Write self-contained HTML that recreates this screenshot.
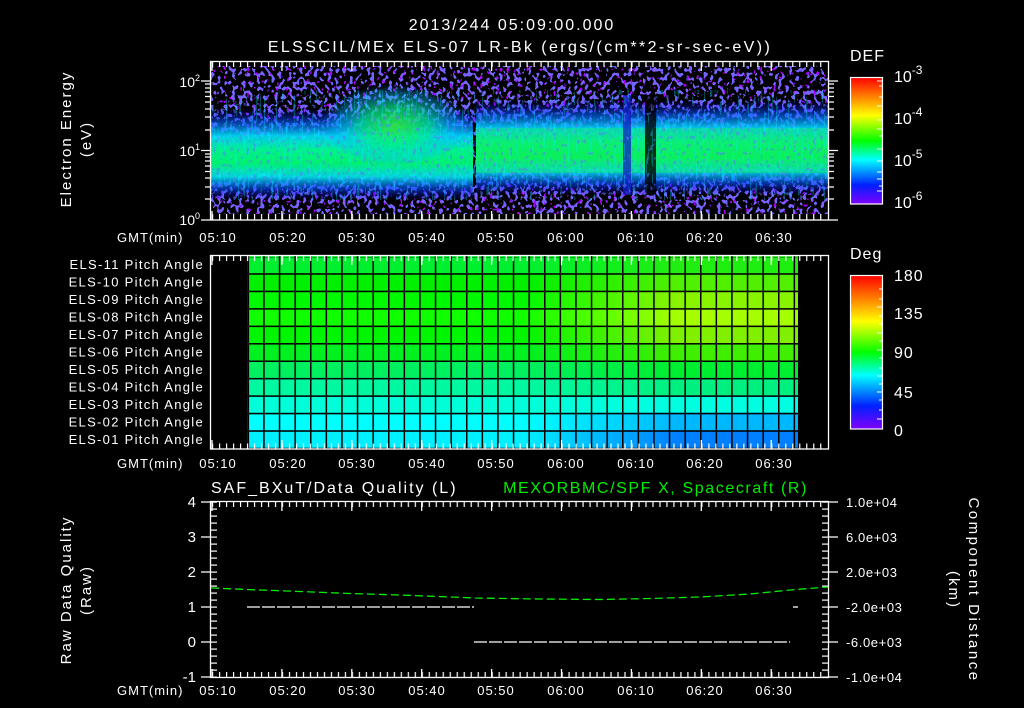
<!DOCTYPE html>
<html><head><meta charset="utf-8"><style>
html,body{margin:0;padding:0;background:#000;width:1024px;height:708px;overflow:hidden}
svg{display:block}
text{font-family:"Liberation Sans",sans-serif;fill:#fff}
.t{letter-spacing:1px}
</style></head><body>
<svg width="1024" height="708" viewBox="0 0 1024 708" xmlns="http://www.w3.org/2000/svg">
<defs>
<filter id="nz" x="0" y="0" width="1" height="1" filterUnits="objectBoundingBox">
 <feTurbulence type="fractalNoise" baseFrequency="0.28 0.22" numOctaves="1" seed="7"/>
 <feColorMatrix type="matrix" values="0 0 0 0 0.18  0 0 0 0 0.12  0 0 0 0 1  7 0 0 0 -3.5"/>
 <feComponentTransfer><feFuncA type="discrete" tableValues="0 1"/></feComponentTransfer>
</filter>
<filter id="nz2" x="0" y="0" width="1" height="1" filterUnits="objectBoundingBox">
 <feTurbulence type="fractalNoise" baseFrequency="0.3 0.25" numOctaves="1" seed="21"/>
 <feColorMatrix type="matrix" values="0 0 0 0 0.4  0 0 0 0 0  0 0 0 0 1  8 0 0 0 -4.9"/>
 <feComponentTransfer><feFuncA type="discrete" tableValues="0 1"/></feComponentTransfer>
</filter>
<filter id="nzb" x="0" y="0" width="1" height="1" filterUnits="objectBoundingBox">
 <feTurbulence type="fractalNoise" baseFrequency="0.3 0.25" numOctaves="1" seed="12"/>
 <feColorMatrix type="matrix" values="0 0 0 0 0.1  0 0 0 0 0.2  0 0 0 0 1  8 0 0 0 -4.7"/>
 <feComponentTransfer><feFuncA type="discrete" tableValues="0 1"/></feComponentTransfer>
</filter>
<filter id="nz3" x="0" y="0" width="1" height="1" filterUnits="objectBoundingBox">
 <feTurbulence type="fractalNoise" baseFrequency="0.5 0.06" numOctaves="1" seed="4"/>
 <feColorMatrix type="matrix" values="0 0 0 0 0  0 0 0 0 0.9  0 0 0 0 1  6 0 0 0 -3.4"/>
 <feComponentTransfer><feFuncA type="discrete" tableValues="0 1"/></feComponentTransfer>
</filter>
<linearGradient id="band" x1="0" y1="0" x2="0" y2="1">
 <stop offset="0" stop-color="#10f" stop-opacity="0"/>
 <stop offset="0.15" stop-color="#0060ff" stop-opacity="0.6"/>
 <stop offset="0.3" stop-color="#00e0ff" stop-opacity="0.9"/>
 <stop offset="0.45" stop-color="#00f090"/>
 <stop offset="0.6" stop-color="#00f070"/>
 <stop offset="0.75" stop-color="#00e8f0" stop-opacity="0.9"/>
 <stop offset="0.88" stop-color="#0050ff" stop-opacity="0.6"/>
 <stop offset="1" stop-color="#10f" stop-opacity="0"/>
</linearGradient>
<radialGradient id="hump" cx="0.5" cy="0.55" r="0.5">
 <stop offset="0" stop-color="#30f030" stop-opacity="0.9"/>
 <stop offset="0.45" stop-color="#00f080" stop-opacity="0.7"/>
 <stop offset="0.8" stop-color="#00c0ff" stop-opacity="0.35"/>
 <stop offset="1" stop-color="#00a0ff" stop-opacity="0"/>
</radialGradient>
<linearGradient id="rb" x1="0" y1="0" x2="0" y2="1">
 <stop offset="0" stop-color="#ff0000"/><stop offset="0.15" stop-color="#ff8000"/>
 <stop offset="0.3" stop-color="#ffff00"/><stop offset="0.5" stop-color="#00ff00"/>
 <stop offset="0.65" stop-color="#00ffff"/><stop offset="0.85" stop-color="#0020ff"/>
 <stop offset="1" stop-color="#8000ff"/>
</linearGradient>
<pattern id="tminor" patternUnits="userSpaceOnUse" x="212" y="0" width="6.99" height="10"><rect x="0" y="0" width="1.2" height="10" fill="#fff"/></pattern>
<pattern id="gv" patternUnits="userSpaceOnUse" x="247.6" y="0" width="15.6" height="10"><rect x="0" y="0" width="1.5" height="10" fill="#000"/></pattern>
<pattern id="gh" patternUnits="userSpaceOnUse" x="0" y="255.8" width="10" height="17.45"><rect x="0" y="0" width="10" height="1.5" fill="#000"/></pattern>
<pattern id="yminor" patternUnits="userSpaceOnUse" x="0" y="501.5" width="10" height="7"><rect x="0" y="0" width="10" height="1.2" fill="#fff"/></pattern>
<linearGradient id="r1" x1="0" x2="1"><stop offset="0.5" stop-color="#00f030"/><stop offset="0.78" stop-color="#20ee10"/></linearGradient>
<linearGradient id="r2" x1="0" x2="1"><stop offset="0.5" stop-color="#00f000"/><stop offset="0.78" stop-color="#50f000"/></linearGradient>
<linearGradient id="r3" x1="0" x2="1"><stop offset="0.5" stop-color="#00f800"/><stop offset="0.78" stop-color="#88f400"/></linearGradient>
<linearGradient id="r4" x1="0" x2="1"><stop offset="0.5" stop-color="#10ff00"/><stop offset="0.78" stop-color="#a4ff00"/></linearGradient>
<linearGradient id="r5" x1="0" x2="1"><stop offset="0.5" stop-color="#00f500"/><stop offset="0.78" stop-color="#80f000"/></linearGradient>
<linearGradient id="r6" x1="0" x2="1"><stop offset="0.5" stop-color="#00f020"/><stop offset="0.78" stop-color="#40ee00"/></linearGradient>
<linearGradient id="r7" x1="0" x2="1"><stop offset="0.5" stop-color="#00f060"/><stop offset="0.78" stop-color="#00ee30"/></linearGradient>
<linearGradient id="r8" x1="0" x2="1"><stop offset="0.5" stop-color="#00f8a0"/><stop offset="0.78" stop-color="#00f080"/></linearGradient>
<linearGradient id="r9" x1="0" x2="1"><stop offset="0.5" stop-color="#00ffd8"/><stop offset="0.78" stop-color="#00ffe0"/></linearGradient>
<linearGradient id="r10" x1="0" x2="1"><stop offset="0.5" stop-color="#00ffff"/><stop offset="0.78" stop-color="#00b8ff"/></linearGradient>
<linearGradient id="r11" x1="0" x2="1"><stop offset="0.5" stop-color="#00f0ff"/><stop offset="0.78" stop-color="#0080ff"/></linearGradient>
</defs>

<text x="512" y="30" font-size="16" text-anchor="middle" letter-spacing="2">2013/244 05:09:00.000</text>
<text x="520" y="52" font-size="16" text-anchor="middle" letter-spacing="2.4">ELSSCIL/MEx ELS-07 LR-Bk  (ergs/(cm**2-sr-sec-eV))</text>

<!-- Top spectrogram -->
<rect x="210.5" y="61.5" width="618" height="158.5" fill="#000"/>
<rect x="210.5" y="66" width="618" height="148" filter="url(#nz)"/>
<rect x="210.5" y="66" width="618" height="148" filter="url(#nz2)"/>
<rect x="211" y="108" width="262" height="92" fill="url(#band)"/>
<ellipse cx="395" cy="122" rx="75" ry="42" fill="url(#hump)"/>
<rect x="476" y="100" width="352" height="95" fill="url(#band)"/>
<rect x="476" y="128" width="352" height="45" fill="#20f030" opacity="0.3"/>
<rect x="623" y="95" width="8" height="100" fill="#1020c0" opacity="0.75"/>
<rect x="645" y="95" width="11" height="100" fill="#000" opacity="0.8"/>
<rect x="210.5" y="90" width="618" height="110" filter="url(#nz3)" opacity="0.3"/>
<rect x="210.5" y="95" width="618" height="105" filter="url(#nzb)" opacity="0.55"/>
<rect x="210.5" y="61.5" width="618" height="158.5" fill="none" stroke="#fff" stroke-width="1.3"/>
<rect x="212" y="62" width="614" height="5" fill="url(#tminor)"/>
<rect x="212" y="214" width="614" height="5.5" fill="url(#tminor)"/>
<g stroke="#fff" stroke-width="1.3">
<path d="M212 62v9M281.9 62v9M351.8 62v9M421.7 62v9M491.6 62v9M561.5 62v9M631.4 62v9M701.3 62v9M771.2 62v9"/>
<path d="M212 220v-9M281.9 220v-9M351.8 220v-9M421.7 220v-9M491.6 220v-9M561.5 220v-9M631.4 220v-9M701.3 220v-9M771.2 220v-9"/>
<path d="M201 81h9M201 150.5h9M201 220h9M205 199h5M205 187h5M205 178h5M205 171.5h5M205 166h5M205 161h5M205 157h5M205 154h5M205 130h5M205 117h5M205 109h5M205 102h5M205 96.5h5M205 92h5M205 88h5M205 84h5"/>
<path d="M829 81h9M829 150.5h9M829 220h9M829 199h5M829 187h5M829 178h5M829 171.5h5M829 166h5M829 161h5M829 157h5M829 154h5M829 130h5M829 117h5M829 109h5M829 102h5M829 96.5h5M829 92h5M829 88h5M829 84h5"/>
</g>
<text x="200" y="87" font-size="14" text-anchor="end">10<tspan dy="-6" font-size="9">2</tspan></text>
<text x="200" y="156" font-size="14" text-anchor="end">10<tspan dy="-6" font-size="9">1</tspan></text>
<text x="200" y="225" font-size="14" text-anchor="end">10<tspan dy="-6" font-size="9">0</tspan></text>
<g transform="translate(71,139) rotate(-90)"><text x="0" y="0" font-size="15" text-anchor="middle" letter-spacing="2">Electron Energy</text></g>
<g transform="translate(91,139) rotate(-90)"><text x="0" y="0" font-size="15" text-anchor="middle" letter-spacing="2">(eV)</text></g>

<text x="850" y="61" font-size="16" letter-spacing="1">DEF</text>
<rect x="850.5" y="77.5" width="32" height="126.5" fill="url(#rb)" stroke="#fff" stroke-width="1.2"/>
<g stroke="#fff" stroke-width="1"><path d="M877 81h5M879 86h3M879 97h3M877 106h5M877 120h5M877 129h5M879 136h3M877 149h5M877 161h5M877 172h5M877 179h5M879 186h3M877 191h5"/></g>
<text x="894" y="82" font-size="16">10<tspan dy="-8" font-size="12">-3</tspan></text>
<text x="894" y="124" font-size="16">10<tspan dy="-8" font-size="12">-4</tspan></text>
<text x="894" y="166" font-size="16">10<tspan dy="-8" font-size="12">-5</tspan></text>
<text x="894" y="208" font-size="16">10<tspan dy="-8" font-size="12">-6</tspan></text>

<g font-size="13" class="t">
<text x="117" y="242">GMT(min)</text>
<text x="218" y="242" text-anchor="middle">05:10</text><text x="288" y="242" text-anchor="middle">05:20</text><text x="357" y="242" text-anchor="middle">05:30</text><text x="427" y="242" text-anchor="middle">05:40</text><text x="496" y="242" text-anchor="middle">05:50</text><text x="566" y="242" text-anchor="middle">06:00</text><text x="636" y="242" text-anchor="middle">06:10</text><text x="705" y="242" text-anchor="middle">06:20</text><text x="774" y="242" text-anchor="middle">06:30</text>
</g>

<!-- Middle panel -->
<g>
<rect x="247.6" y="255.8" width="550.4" height="17.45" fill="url(#r1)"/>
<rect x="247.6" y="273.25" width="550.4" height="17.45" fill="url(#r2)"/>
<rect x="247.6" y="290.7" width="550.4" height="17.45" fill="url(#r3)"/>
<rect x="247.6" y="308.15" width="550.4" height="17.45" fill="url(#r4)"/>
<rect x="247.6" y="325.6" width="550.4" height="17.45" fill="url(#r5)"/>
<rect x="247.6" y="343.05" width="550.4" height="17.45" fill="url(#r6)"/>
<rect x="247.6" y="360.5" width="550.4" height="17.45" fill="url(#r7)"/>
<rect x="247.6" y="377.95" width="550.4" height="17.45" fill="url(#r8)"/>
<rect x="247.6" y="395.4" width="550.4" height="17.45" fill="url(#r9)"/>
<rect x="247.6" y="412.85" width="550.4" height="17.45" fill="url(#r10)"/>
<rect x="247.6" y="430.3" width="550.4" height="18.7" fill="url(#r11)"/>
<rect x="247.6" y="255.8" width="551" height="193.2" fill="url(#gv)"/>
<rect x="247.6" y="257" width="550.4" height="192" fill="url(#gh)"/>
</g>
<rect x="210.5" y="255.5" width="618" height="193.5" fill="none" stroke="#fff" stroke-width="1.3"/>
<rect x="212" y="256" width="614" height="5" fill="url(#tminor)"/>
<rect x="212" y="443.5" width="614" height="5" fill="url(#tminor)"/>
<g stroke="#fff" stroke-width="1.3">
<path d="M212 256v9M281.9 256v9M351.8 256v9M421.7 256v9M491.6 256v9M561.5 256v9M631.4 256v9M701.3 256v9M771.2 256v9"/>
<path d="M212 449v-9M281.9 449v-9M351.8 449v-9M421.7 449v-9M491.6 449v-9M561.5 449v-9M631.4 449v-9M701.3 449v-9M771.2 449v-9"/>
</g>
<g font-size="13" text-anchor="end" letter-spacing="1.3">
<text x="204" y="269">ELS-11 Pitch Angle</text>
<text x="204" y="286.5">ELS-10 Pitch Angle</text>
<text x="204" y="304">ELS-09 Pitch Angle</text>
<text x="204" y="321.5">ELS-08 Pitch Angle</text>
<text x="204" y="339">ELS-07 Pitch Angle</text>
<text x="204" y="356.5">ELS-06 Pitch Angle</text>
<text x="204" y="374">ELS-05 Pitch Angle</text>
<text x="204" y="391.5">ELS-04 Pitch Angle</text>
<text x="204" y="409">ELS-03 Pitch Angle</text>
<text x="204" y="426.5">ELS-02 Pitch Angle</text>
<text x="204" y="444">ELS-01 Pitch Angle</text>
</g>
<text x="850" y="259" font-size="16" letter-spacing="1">Deg</text>
<rect x="850.5" y="275.5" width="32" height="153.5" fill="url(#rb)" stroke="#fff" stroke-width="1.2"/>
<g stroke="#fff" stroke-width="1"><path d="M879 289h3M879 299h3M877 307h5M879 316h3M879 324h3M877 333h5M879 341h3M877 350h5M879 358h3M879 368h3M877 376h5M879 384h3M877 392h5M879 400h3M879 410h3M877 419h5"/></g>
<g font-size="16" letter-spacing="1">
<text x="894" y="281">180</text><text x="894" y="319">135</text><text x="894" y="358">90</text><text x="894" y="398">45</text><text x="894" y="436">0</text>
</g>
<g font-size="13" class="t">
<text x="117" y="468">GMT(min)</text>
<text x="218" y="468" text-anchor="middle">05:10</text><text x="288" y="468" text-anchor="middle">05:20</text><text x="357" y="468" text-anchor="middle">05:30</text><text x="427" y="468" text-anchor="middle">05:40</text><text x="496" y="468" text-anchor="middle">05:50</text><text x="566" y="468" text-anchor="middle">06:00</text><text x="636" y="468" text-anchor="middle">06:10</text><text x="705" y="468" text-anchor="middle">06:20</text><text x="774" y="468" text-anchor="middle">06:30</text>
</g>

<!-- Bottom panel -->
<text x="211" y="493" font-size="16" letter-spacing="2">SAF_BXuT/Data Quality (L)</text>
<text x="808" y="493" font-size="16" text-anchor="end" letter-spacing="1.6" style="fill:#00ee00">MEXORBMC/SPF X, Spacecraft (R)</text>
<rect x="210.5" y="501.5" width="618" height="176" fill="none" stroke="#fff" stroke-width="1.3"/>
<rect x="212" y="502" width="614" height="5" fill="url(#tminor)"/>
<rect x="212" y="672" width="614" height="5.5" fill="url(#tminor)"/>
<rect x="211" y="502" width="6" height="175" fill="url(#yminor)"/>
<rect x="822" y="502" width="6" height="175" fill="url(#yminor)"/>
<g stroke="#fff" stroke-width="1.3">
<path d="M212 502v9M281.9 502v9M351.8 502v9M421.7 502v9M491.6 502v9M561.5 502v9M631.4 502v9M701.3 502v9M771.2 502v9"/>
<path d="M212 678v-9M281.9 678v-9M351.8 678v-9M421.7 678v-9M491.6 678v-9M561.5 678v-9M631.4 678v-9M701.3 678v-9M771.2 678v-9"/>
<path d="M201 502h9M201 537h9M201 572h9M201 607h9M201 642h9M201 677h9"/>
<path d="M829 502h9M829 537h9M829 572h9M829 607h9M829 642h9M829 677h9"/>
</g>
<g font-size="15" text-anchor="end">
<text x="196" y="507">4</text><text x="196" y="542">3</text><text x="196" y="577">2</text><text x="196" y="612">1</text><text x="196" y="647">0</text><text x="196" y="682">-1</text>
</g>
<g font-size="13" letter-spacing="0.6">
<text x="846" y="507">1.0e+04</text><text x="846" y="542">6.0e+03</text><text x="846" y="577">2.0e+03</text><text x="846" y="612">-2.0e+03</text><text x="846" y="647">-6.0e+03</text><text x="846" y="682">-1.0e+04</text>
</g>
<polyline points="211,588 260,590 300,591.5 350,593.5 400,595 450,597 475,598 540,599 600,599.5 650,598.5 700,597 750,594 790,590 828,587" fill="none" stroke="#00ee00" stroke-width="1.3" stroke-dasharray="8,4"/>
<path d="M247 607H474" stroke="#fff" stroke-width="1.3" stroke-dasharray="13,2"/>
<path d="M474 642H790" stroke="#fff" stroke-width="1.3" stroke-dasharray="13,2"/>
<path d="M793 607h5" stroke="#fff" stroke-width="1.3"/>
<g transform="translate(71,590) rotate(-90)"><text x="0" y="0" font-size="15" text-anchor="middle" letter-spacing="2">Raw Data Quality</text></g>
<g transform="translate(91,590) rotate(-90)"><text x="0" y="0" font-size="15" text-anchor="middle" letter-spacing="2">(Raw)</text></g>
<g transform="translate(969,590) rotate(90)"><text x="0" y="0" font-size="15" text-anchor="middle" letter-spacing="2.5">Component Distance</text></g>
<g transform="translate(949,590) rotate(90)"><text x="0" y="0" font-size="15" text-anchor="middle" letter-spacing="2">(km)</text></g>
<g font-size="13" class="t">
<text x="117" y="695">GMT(min)</text>
<text x="218" y="695" text-anchor="middle">05:10</text><text x="288" y="695" text-anchor="middle">05:20</text><text x="357" y="695" text-anchor="middle">05:30</text><text x="427" y="695" text-anchor="middle">05:40</text><text x="496" y="695" text-anchor="middle">05:50</text><text x="566" y="695" text-anchor="middle">06:00</text><text x="636" y="695" text-anchor="middle">06:10</text><text x="705" y="695" text-anchor="middle">06:20</text><text x="774" y="695" text-anchor="middle">06:30</text>
</g>
</svg>
</body></html>
